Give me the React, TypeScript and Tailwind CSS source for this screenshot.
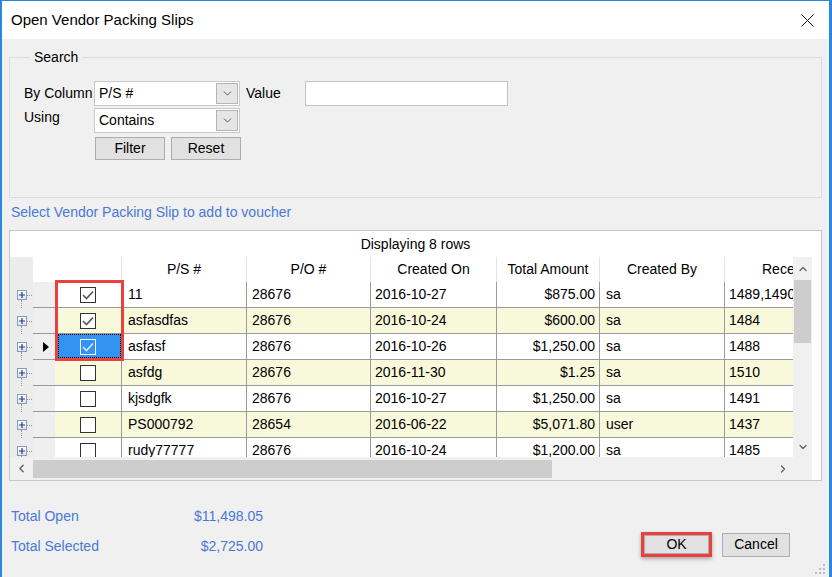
import { ChevronDown, ChevronUp, ChevronLeft, ChevronRight } from 'lucide-react';

const rows = [
  { ps: '11', po: '28676', on: '2016-10-27', amt: '$875.00', by: 'sa', rec: '1489,1490,1491', checked: true },
  { ps: 'asfasdfas', po: '28676', on: '2016-10-24', amt: '$600.00', by: 'sa', rec: '1484', checked: true },
  { ps: 'asfasf', po: '28676', on: '2016-10-26', amt: '$1,250.00', by: 'sa', rec: '1488', checked: true, current: true },
  { ps: 'asfdg', po: '28676', on: '2016-11-30', amt: '$1.25', by: 'sa', rec: '1510' },
  { ps: 'kjsdgfk', po: '28676', on: '2016-10-27', amt: '$1,250.00', by: 'sa', rec: '1491' },
  { ps: 'PS000792', po: '28654', on: '2016-06-22', amt: '$5,071.80', by: 'user', rec: '1437' },
  { ps: 'rudy77777', po: '28676', on: '2016-10-24', amt: '$1,200.00', by: 'sa', rec: '1485' },
];

function Check({ checked, light }: { checked?: boolean; light?: boolean }) {
  return (
    <div className={`w-[16px] h-[16px] border flex items-center justify-center ${light ? 'border-white' : 'border-[#333] bg-white'}`}>
      {checked && (
        <svg width="12" height="10" viewBox="0 0 12 10">
          <path d="M1 5 L4.5 8.5 L11 1.5" fill="none" stroke={light ? '#d6eaff' : '#555'} strokeWidth="1.6" />
        </svg>
      )}
    </div>
  );
}

function Expander() {
  return (
    <div className="relative w-[23px] h-full flex items-center">
      <div className="ml-[7px] w-[10px] h-[10px] border border-[#8a9bb8] bg-gradient-to-b from-white to-[#dde4ee] flex items-center justify-center">
        <svg width="6" height="6" viewBox="0 0 6 6">
          <path d="M0 3 H6 M3 0 V6" stroke="#1f3f8f" strokeWidth="1.2" />
        </svg>
      </div>
      <div className="w-[5px] border-t border-dotted border-[#999]" />
    </div>
  );
}

function Combo({ value }: { value: string }) {
  return (
    <div className="w-[146px] h-[25px] bg-white border border-[#c9c9c9] flex items-center">
      <span className="flex-1 pl-[4px] text-[14px] text-black">{value}</span>
      <div className="w-[22px] h-[21px] mr-[1px] bg-[#e6e6e6] border border-[#b5b5b5] flex items-center justify-center">
        <ChevronDown className="w-[13px] h-[13px] text-[#555]" strokeWidth={1.75} />
      </div>
    </div>
  );
}

function Btn({ label, w }: { label: string; w: string }) {
  return (
    <div className={`${w} h-[23px] bg-[#e1e1e1] border border-[#adadad] flex items-center justify-center text-[14px] text-black`}>
      {label}
    </div>
  );
}

export default function App() {
  const font = { fontFamily: '"Liberation Sans", Arial, sans-serif' };
  return (
    <div style={font} className="w-[832px] h-[577px] bg-[#f0f0f0] border-t border-l-2 border-r-[3px] border-[#2b88d8] flex flex-col relative overflow-hidden">
      {/* title bar */}
      <div className="h-[38px] bg-white flex items-center justify-between pl-[9px] pr-[15px] shrink-0">
        <span className="text-[15px] text-black">Open Vendor Packing Slips</span>
        <svg width="13" height="13" viewBox="0 0 13 13">
          <path d="M0.5 0.5 L12.5 12.5 M12.5 0.5 L0.5 12.5" stroke="#111" strokeWidth="1" />
        </svg>
      </div>

      {/* search group */}
      <fieldset className="mx-[7px] mt-[10px] border border-[#dcdcdc] h-[149px] pl-[14px] shrink-0">
        <legend className="ml-[6px] px-[4px] text-[14px] text-black leading-[16px]">Search</legend>
        <div className="mt-[16px] flex items-center h-[25px]">
          <span className="w-[70px] text-[14px] text-black">By Column</span>
          <Combo value="P/S #" />
          <span className="ml-[6px] w-[59px] text-[14px] text-black">Value</span>
          <div className="w-[203px] h-[25px] bg-white border border-[#c3c3c3]" />
        </div>
        <div className="mt-[2px] flex items-start h-[25px]">
          <span className="w-[70px] text-[14px] text-black leading-[16px] pt-[1px]">Using</span>
          <Combo value="Contains" />
        </div>
        <div className="mt-[4px] flex ml-[71px] gap-[6px]">
          <Btn label="Filter" w="w-[70px]" />
          <Btn label="Reset" w="w-[70px]" />
        </div>
      </fieldset>

      <div className="pl-[9px] mt-[4px] h-[20px] text-[14px] text-[#4a78d8] shrink-0">Select Vendor Packing Slip to add to voucher</div>

      {/* grid */}
      <div className="relative mx-[7px] mt-[8px] h-[251px] border border-[#c8c8c8] bg-white flex flex-col shrink-0">
        <div className="h-[26px] flex items-center justify-center text-[14px] text-black">Displaying 8 rows</div>
        <div className="flex flex-1 min-h-0">
          <div className="w-[783px] flex flex-col">
            {/* column headers */}
            <div className="h-[25px] flex text-[14px] text-black">
              <div className="w-[23px] bg-[#ececec]" />
              <div className="w-[22px]" />
              <div className="w-[67px] border-r border-[#e3e3e3]" />
              <div className="w-[125px] border-r border-[#e3e3e3] flex items-center justify-center">P/S #</div>
              <div className="w-[124px] border-r border-[#e3e3e3] flex items-center justify-center">P/O #</div>
              <div className="w-[126px] border-r border-[#e3e3e3] flex items-center justify-center">Created On</div>
              <div className="w-[103px] border-r border-[#e3e3e3] flex items-center justify-center">Total Amount</div>
              <div className="w-[125px] border-r border-[#e3e3e3] flex items-center justify-center">Created By</div>
              <div className="w-[68px] overflow-hidden whitespace-nowrap flex items-center pl-[37px]">Receiving</div>
            </div>
            {/* rows */}
            <div className="h-[175px] overflow-hidden">
              {rows.map((r, i) => {
                const bg = i % 2 === 1 ? 'bg-[#f8f8da]' : 'bg-white';
                return (
                  <div key={i} className="h-[26px] flex text-[14px] text-black">
                    <div className="w-[23px] bg-[#ececec] relative">
                      <Expander />
                      <div className="absolute left-[11px] top-[18px] h-[16px] border-l border-dotted border-[#999]" />
                    </div>
                    <div className="w-[22px] bg-[#efefef] border-b border-[#9a9a9a] flex items-center pl-[10px]">
                      {r.current && (
                        <svg width="6" height="10" viewBox="0 0 6 10"><path d="M0 0 L6 5 L0 10 Z" fill="#000" /></svg>
                      )}
                    </div>
                    <div className={`w-[67px] border-b border-r border-[#9a9a9a] flex items-center justify-center ${r.current ? 'bg-[#3393f3]' : bg}`}>
                      <Check checked={r.checked} light={r.current} />
                    </div>
                    <div className={`w-[125px] border-b border-r border-[#9a9a9a] flex items-center pl-[6px] ${bg}`}>{r.ps}</div>
                    <div className={`w-[124px] border-b border-r border-[#9a9a9a] flex items-center pl-[5px] ${bg}`}>{r.po}</div>
                    <div className={`w-[126px] border-b border-r border-[#9a9a9a] flex items-center pl-[4px] ${bg}`}>{r.on}</div>
                    <div className={`w-[103px] border-b border-r border-[#9a9a9a] flex items-center justify-end pr-[4px] ${bg}`}>{r.amt}</div>
                    <div className={`w-[125px] border-b border-r border-[#9a9a9a] flex items-center pl-[6px] ${bg}`}>{r.by}</div>
                    <div className={`w-[68px] border-b border-[#9a9a9a] flex items-center pl-[4px] overflow-hidden whitespace-nowrap ${bg}`}>{r.rec}</div>
                  </div>
                );
              })}
            </div>
            {/* horizontal scrollbar */}
            <div className="h-[23px] bg-[#f0f0f0] flex items-center">
              <div className="w-[23px] flex items-center justify-center">
                <ChevronLeft className="w-[13px] h-[13px] text-[#606060]" strokeWidth={2.5} />
              </div>
              <div className="w-[519px] h-[18px] bg-[#cdcdcd]" />
              <div className="flex-1" />
              <div className="w-[20px] flex items-center justify-center">
                <ChevronRight className="w-[12px] h-[12px] text-[#606060]" strokeWidth={2.5} />
              </div>
            </div>
          </div>
          {/* vertical scrollbar */}
          <div className="w-[19px] flex flex-col bg-[#f0f0f0]">
            <div className="h-[23px] flex items-center justify-center">
              <ChevronUp className="w-[12px] h-[12px] text-[#606060]" strokeWidth={2.5} />
            </div>
            <div className="h-[63px] mx-[1px] bg-[#cdcdcd]" />
            <div className="flex-1" />
            <div className="h-[20px] flex items-center justify-center">
              <ChevronDown className="w-[12px] h-[12px] text-[#606060]" strokeWidth={2.5} />
            </div>
            <div className="h-[23px]" />
          </div>
        </div>
        {/* highlight around checkbox column */}
        <div className="absolute left-[45px] top-[49px] w-[69px] h-[81px] border-[3px] border-[#e8413e]" />
        {/* focus rectangle */}
        <div className="absolute left-[48px] top-[103px] w-[63px] h-[24px] border border-dotted border-black" />
      </div>

      {/* totals and buttons */}
      <div className="flex-1 flex items-start pl-[9px] pr-[39px] pt-[20px] relative">
        <div className="w-[252px] text-[14px] text-[#4a78d8]">
          <div className="flex justify-between h-[30px] items-center">
            <span>Total Open</span><span>$11,498.05</span>
          </div>
          <div className="flex justify-between h-[30px] items-center">
            <span>Total Selected</span><span>$2,725.00</span>
          </div>
        </div>
        <div className="flex-1" />
        <div className="mt-[31px] flex items-center gap-[10px]">
          <div className="border-[3px] border-[#e8413e] shadow-[0_2px_4px_rgba(0,0,0,0.3)]">
            <div className="w-[65px] h-[19px] bg-[#e1e1e1] border border-[#adadad] flex items-center justify-center text-[14px] text-black">OK</div>
          </div>
          <div className="w-[68px] h-[24px] bg-[#e1e1e1] border border-[#adadad] flex items-center justify-center text-[14px] text-black">Cancel</div>
        </div>
        <svg className="absolute right-[4px] bottom-[3px]" width="10" height="10" viewBox="0 0 10 10">
          <rect x="8" y="0" width="2" height="2" fill="#bcbcbc" />
          <rect x="4" y="4" width="2" height="2" fill="#bcbcbc" />
          <rect x="8" y="4" width="2" height="2" fill="#bcbcbc" />
          <rect x="0" y="8" width="2" height="2" fill="#bcbcbc" />
          <rect x="4" y="8" width="2" height="2" fill="#bcbcbc" />
          <rect x="8" y="8" width="2" height="2" fill="#bcbcbc" />
        </svg>
      </div>
    </div>
  );
}
